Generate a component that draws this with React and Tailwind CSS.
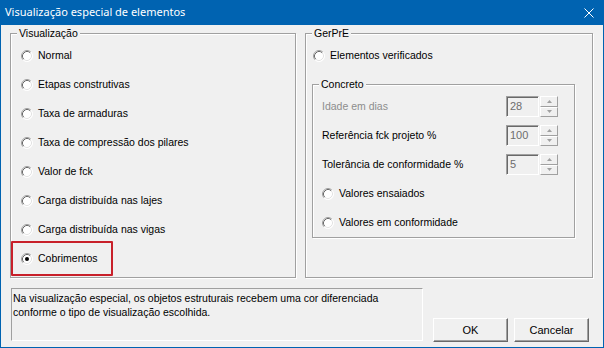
import React from 'react';

const Radio = ({ checked }) => (
  <svg width="12" height="12" viewBox="0 0 12 12" className="shrink-0">
    <circle cx="6" cy="6" r="5.5" fill="#fff" />
    <path d="M2.11 9.89 A5.5 5.5 0 0 1 9.89 2.11" fill="none" stroke="#a0a0a0" />
    <path d="M2.82 9.18 A4.5 4.5 0 0 1 9.18 2.82" fill="none" stroke="#696969" />
    <path d="M9.89 2.11 A5.5 5.5 0 0 1 2.11 9.89" fill="none" stroke="#ffffff" />
    <path d="M9.18 2.82 A4.5 4.5 0 0 1 2.82 9.18" fill="none" stroke="#e3e3e3" />
    {checked && <circle cx="6" cy="6" r="2" fill="#000" />}
  </svg>
);

const RadioRow = ({ label, checked }) => (
  <div className="flex h-[29px] items-center gap-[5px]">
    <Radio checked={checked} />
    <span>{label}</span>
  </div>
);

const Arrow = ({ up }) => (
  <svg width="5" height="3" viewBox="0 0 5 3">
    <path d={up ? 'M2.5 0 L5 3 L0 3 Z' : 'M0 0 L5 0 L2.5 3 Z'} fill="#a0a0a0" />
  </svg>
);

// disabled edit + spin control
const Spin = ({ value }) => (
  <div className="flex h-[21px]">
    <div className="w-[33px] h-full border border-t-[#a0a0a0] border-l-[#a0a0a0] border-r-white border-b-white shadow-[inset_1px_1px_0_#696969] bg-[#f0f0f0] pl-[3px] pt-[2px] text-[#6d6d6d] text-[11px] leading-[15px]">
      {value}
    </div>
    <div className="w-[18px] h-full flex flex-col ml-px">
      <div className="flex-1 flex items-center justify-center border border-t-white border-l-white border-r-[#a0a0a0] border-b-[#a0a0a0]">
        <Arrow up />
      </div>
      <div className="flex-1 flex items-center justify-center border border-t-white border-l-white border-r-[#a0a0a0] border-b-[#a0a0a0]">
        <Arrow />
      </div>
    </div>
  </div>
);

const FieldRow = ({ label, value, disabled }) => (
  <div className="flex h-[29px] items-center justify-between">
    <span className={disabled ? 'text-[#8d8d8d]' : ''}>{label}</span>
    <Spin value={value} />
  </div>
);

const Button = ({ children }) => (
  <button className="w-[75px] h-[24px] bg-[#f0f0f0] border border-t-white border-l-white border-r-[#696969] border-b-[#696969] shadow-[inset_-1px_-1px_0_#a0a0a0] text-[11px] leading-none">
    {children}
  </button>
);

const groupCls =
  'border border-[#a0a0a0] shadow-[inset_1px_1px_0_#fff,1px_1px_0_#fff]';
const legendCls = 'ml-[6px] px-[2px] leading-[13px] bg-[#f0f0f0]';

export default function App() {
  const left = [
    'Normal',
    'Etapas construtivas',
    'Taxa de armaduras',
    'Taxa de compressão dos pilares',
    'Valor de fck',
    'Carga distribuída nas lajes',
    'Carga distribuída nas vigas',
  ];

  return (
    <div className="relative w-[604px] h-[348px] flex flex-col bg-[#f0f0f0] border border-t-0 border-[#0063b1] font-['Liberation_Sans',Arial,sans-serif] text-[10.5px] text-black">
      {/* title bar */}
      <div className="h-[25px] shrink-0 flex items-center justify-between bg-[#0063b1] pl-[4px] pr-[9px]">
        <span className="text-white text-[11px] font-['Noto_Sans',sans-serif]">Visualização especial de elementos</span>
        <svg width="10" height="10" viewBox="0 0 10 10">
          <path d="M0.5 0.5 L9.5 9.5 M9.5 0.5 L0.5 9.5" stroke="#fff" strokeWidth="1" />
        </svg>
      </div>

      <div className="flex-1 px-[9px]">
        <div className="flex gap-[9px] mt-[2px]">
          <fieldset className={`w-[286px] h-[251px] ${groupCls}`}>
            <legend className={legendCls}>Visualização</legend>
            <div className="pl-[10px] pt-px flex flex-col">
              {left.map((l) => (
                <RadioRow key={l} label={l} />
              ))}
              <RadioRow label="Cobrimentos" checked />
            </div>
          </fieldset>

          <fieldset className={`w-[288px] h-[251px] ${groupCls}`}>
            <legend className={legendCls}>GerPrE</legend>
            <div className="px-[6px] pt-px">
              <div className="pl-px">
                <RadioRow label="Elementos verificados" />
              </div>
              <fieldset className={`mt-[8px] w-[263px] h-[160px] ${groupCls}`}>
                <legend className={legendCls}>Concreto</legend>
                <div className="pl-[9px] pr-[16px] pt-px">
                  <FieldRow label="Idade em dias" value="28" disabled />
                  <FieldRow label="Referência fck projeto %" value="100" />
                  <FieldRow label="Tolerância de conformidade %" value="5" />
                  <RadioRow label="Valores ensaiados" />
                  <RadioRow label="Valores em conformidade" />
                </div>
              </fieldset>
            </div>
          </fieldset>
        </div>

        <div className="flex mt-[10px]">
          <div className="ml-px w-[412px] h-[53px] border border-t-[#a0a0a0] border-l-[#a0a0a0] border-r-white border-b-white px-px leading-[14px] pt-[2px]">
            Na visualização especial, os objetos estruturais recebem uma cor diferenciada
            <br />
            conforme o tipo de visualização escolhida.
          </div>
          <div className="flex gap-[6px] ml-[10px] mt-[30px]">
            <Button>OK</Button>
            <Button>Cancelar</Button>
          </div>
        </div>
      </div>

      {/* annotation highlight */}
      <div className="absolute left-[10px] top-[241px] w-[102px] h-[35px] border-2 border-[#c8202a] rounded-[1px]" />
    </div>
  );
}
